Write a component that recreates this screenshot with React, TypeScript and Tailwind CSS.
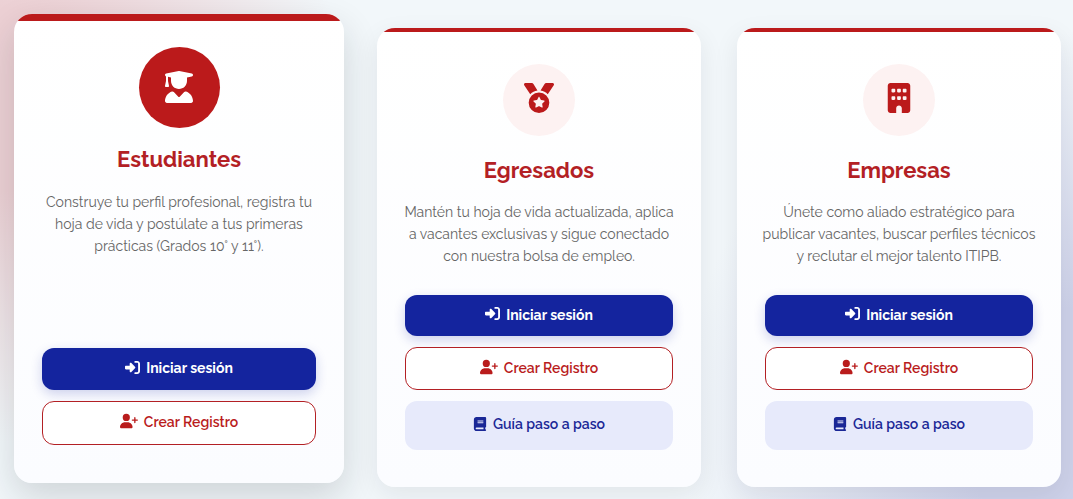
import React from 'react';
import type { IconType } from 'react-icons';
import {
  FaBook,
  FaBuilding,
  FaMedal,
  FaRightToBracket,
  FaUserGraduate,
  FaUserPlus,
} from 'react-icons/fa6';
import { clsx } from 'clsx';

interface Profile {
  title: string;
  description: string;
  icon: IconType;
  featured?: boolean;
  guide?: boolean;
}

const profiles: Profile[] = [
  {
    title: 'Estudiantes',
    description:
      'Construye tu perfil profesional, registra tu hoja de vida y postúlate a tus primeras prácticas (Grados 10° y 11°).',
    icon: FaUserGraduate,
    featured: true,
  },
  {
    title: 'Egresados',
    description:
      'Mantén tu hoja de vida actualizada, aplica a vacantes exclusivas y sigue conectado con nuestra bolsa de empleo.',
    icon: FaMedal,
    guide: true,
  },
  {
    title: 'Empresas',
    description:
      'Únete como aliado estratégico para publicar vacantes, buscar perfiles técnicos y reclutar el mejor talento ITIPB.',
    icon: FaBuilding,
    guide: true,
  },
];

const buttonBase = 'flex w-full items-center justify-center gap-1.5 rounded-xl text-sm';

const ProfileCard: React.FC<{ profile: Profile }> = ({ profile }) => {
  const { title, description, icon: Icon, featured, guide } = profile;

  return (
    <article
      className={clsx(
        'flex flex-col items-center overflow-hidden rounded-[18px] bg-linear-to-b from-white to-[#fbfcff] text-center',
        featured
          ? '-mx-[3px] -mt-[14px] mb-1 pb-[38px] shadow-[0_14px_36px_rgba(20,30,40,0.16)]'
          : 'pb-[37px] shadow-[0_8px_26px_rgba(20,30,40,0.08)]'
      )}
    >
      <div className={clsx('self-stretch bg-[#bb1a1b]', featured ? 'h-[7px]' : 'h-1')} />

      <div
        className={clsx(
          'flex shrink-0 items-center justify-center rounded-full',
          featured
            ? 'mt-[26px] size-[81px] bg-[#bb1a1b] pb-0.5 text-[32px] text-white'
            : 'mt-8 size-[72px] bg-[#fdf2f2] pb-1 text-3xl text-[#bb1a1b]'
        )}
      >
        <Icon />
      </div>

      <h3 className={clsx('text-[22px] leading-7 font-bold text-[#b32024]', featured ? 'mt-[17px]' : 'mt-5')}>
        {title}
      </h3>
      <p
        className={clsx(
          'mb-7 text-sm leading-[22px] text-[#666666]',
          featured ? 'mt-[18px] px-7' : 'mt-[17px] px-6'
        )}
      >
        {description}
      </p>

      <div className="mt-auto flex flex-col gap-[11px] self-stretch px-7">
        <button
          type="button"
          className={clsx(
            buttonBase,
            'bg-[#14249e] pb-0.5 font-bold text-white shadow-[0_4px_12px_rgba(20,36,158,0.2)]',
            featured ? 'h-[42px]' : 'h-[41px]'
          )}
        >
          <FaRightToBracket className="mb-0.5 text-[15px]" />
          Iniciar sesión
        </button>
        <button
          type="button"
          className={clsx(
            buttonBase,
            'border border-[#b32024] bg-white pb-0.5 font-semibold text-[#b91c1c]',
            featured ? 'h-11' : 'h-[43px]'
          )}
        >
          <FaUserPlus className="mb-0.5 text-lg" />
          Crear Registro
        </button>
        {guide && (
          <button
            type="button"
            className={clsx(buttonBase, 'h-[49px] bg-[#e7eafb] pb-1 font-semibold text-[#1a2796]')}
          >
            <FaBook />
            Guía paso a paso
          </button>
        )}
      </div>
    </article>
  );
};

export default function App() {
  return (
    <main className="min-h-screen bg-[#f2f7fa] bg-[radial-gradient(circle_at_0%_20%,#ecd0d4_0%,#ecd0d4_8%,transparent_30%),radial-gradient(circle_at_100%_85%,#cdd1e9_0%,#cdd1e9_10%,transparent_34%)] pt-7 pr-3 pb-3 pl-[17px] font-['Raleway','Lato',sans-serif]">
      <section className="grid grid-cols-3 gap-9">
        {profiles.map((profile) => (
          <ProfileCard key={profile.title} profile={profile} />
        ))}
      </section>
    </main>
  );
}
